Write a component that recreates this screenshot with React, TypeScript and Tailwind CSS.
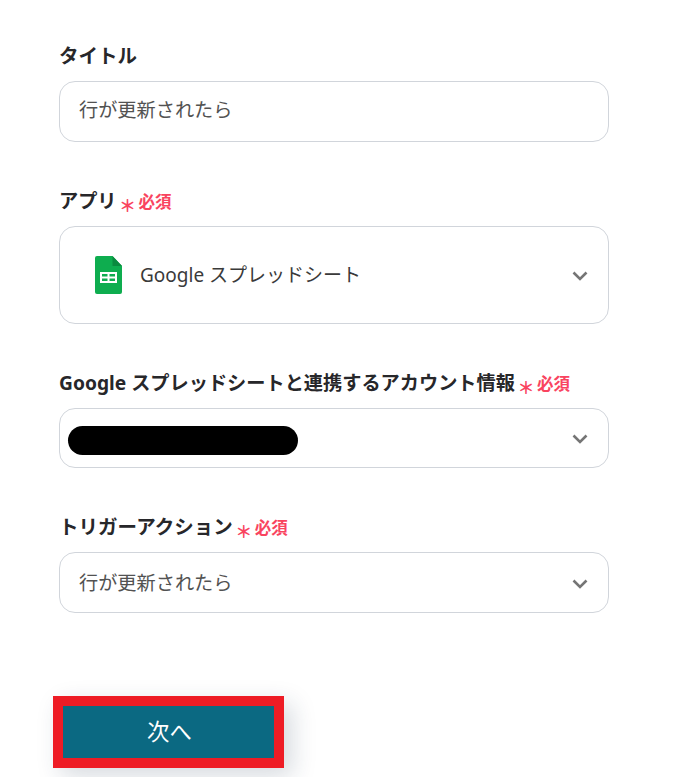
import React from "react";

const font = { fontFamily: '"Noto Sans", "Noto Sans CJK JP", sans-serif' };

function Chevron() {
  return (
    <svg width="16" height="10" viewBox="0 0 16 10" fill="none" className="absolute right-[20px] top-1/2 -translate-y-1/2 mt-[1px]">
      <path d="M1.5 1.5 L8 8 L14.5 1.5" stroke="#757575" strokeWidth="2.6" />
    </svg>
  );
}

function Required() {
  return (
    <span className="flex items-center ml-[5px] text-[#f9445f] text-[16.5px] font-bold leading-none mt-[3px]">
      <span className="flex justify-center text-[17px] leading-none font-bold mt-[6px] mr-[5px] w-[12px]">＊</span>
      必須
    </span>
  );
}

function Label({ children, required, wide }: { children: React.ReactNode; required?: boolean; wide?: boolean }) {
  return (
    <div className={wide ? "flex items-center h-[27px] text-[19.5px] font-bold text-[#27272a] leading-none" : "flex items-center h-[27px] text-[19.2px] font-bold text-[#27272a] leading-none"}>
      <span>{children}</span>
      {required && <Required />}
    </div>
  );
}

export default function App() {
  return (
    <div className="w-[700px] h-[777px] bg-white overflow-hidden pl-[59px]" style={font}>
      <div className="w-[550px] pt-[42px]">
        <Label wide>タイトル</Label>
        <div className="mt-[12px] h-[61px] rounded-[16px] border border-[#d1d5db] flex items-center pl-[19px] pb-[2px] text-[19.2px] text-[#525252]">
          行が更新されたら
        </div>

        <div className="mt-[45px]">
          <Label required>アプリ</Label>
        </div>
        <div className="relative mt-[12px] h-[98px] rounded-[16px] border border-[#d1d5db] flex items-center pl-[35px] text-[19px] text-[#3a3a3a]">
          <svg width="27" height="38" viewBox="0 0 27 38" className="shrink-0">
            <path d="M2 0 H17.5 L27 10 V36 a2 2 0 0 1 -2 2 H2 a2 2 0 0 1 -2 -2 V2 a2 2 0 0 1 2 -2 Z" fill="#0ead4f" />
            <path d="M17.5 0 L27 10 H17.5 Z" fill="#0a8a3f" />
            <path d="M5 16 H22 V27 H5 Z M7 18 V20.5 H12.5 V18 Z M14.5 18 V20.5 H20 V18 Z M7 22.5 V25 H12.5 V22.5 Z M14.5 22.5 V25 H20 V22.5 Z" fill="#ffffff" fillRule="evenodd" />
          </svg>
          <span className="ml-[18px]">Google スプレッドシート</span>
          <Chevron />
        </div>

        <div className="mt-[45px]">
          <Label required>Google スプレッドシートと連携するアカウント情報</Label>
        </div>
        <div className="relative mt-[12px] h-[60px] rounded-[16px] border border-[#d1d5db] flex items-center pl-[8px]">
          <div className="w-[230px] h-[29px] bg-black rounded-full mt-[4px]" />
          <Chevron />
        </div>

        <div className="mt-[45px]">
          <Label required wide>トリガーアクション</Label>
        </div>
        <div className="relative mt-[12px] h-[61px] rounded-[16px] border border-[#d1d5db] flex items-center pl-[19px] text-[19.2px] text-[#525252]">
          <span className="mt-[1px]">行が更新されたら</span>
          <Chevron />
        </div>

        <div className="mt-[83px] -ml-[6px] w-[231px] h-[72px] border-[10px] border-[#ee1c25] shadow-[8px_8px_24px_rgba(30,50,80,0.18)]">
          <div className="h-full bg-[#0b6982] flex items-center justify-center pl-[2px] text-white text-[22.4px]">
            次へ
          </div>
        </div>
      </div>
    </div>
  );
}
